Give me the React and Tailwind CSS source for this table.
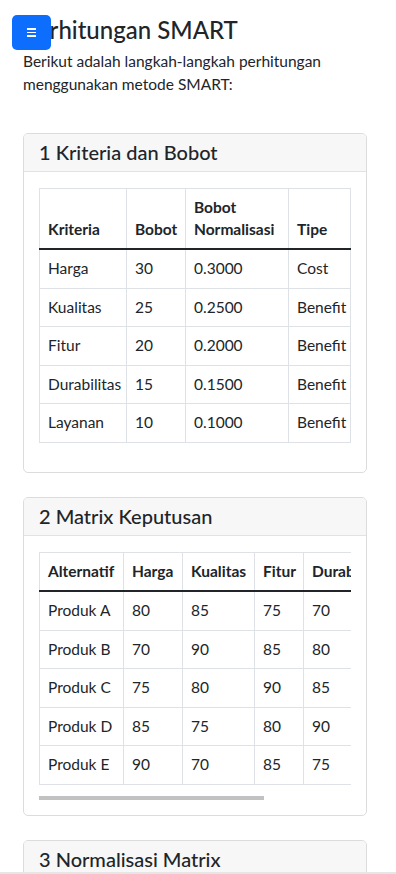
import React from 'react';

const kriteria = [
  { nama: 'Harga', bobot: 30, norm: '0.3000', tipe: 'Cost' },
  { nama: 'Kualitas', bobot: 25, norm: '0.2500', tipe: 'Benefit' },
  { nama: 'Fitur', bobot: 20, norm: '0.2000', tipe: 'Benefit' },
  { nama: 'Durabilitas', bobot: 15, norm: '0.1500', tipe: 'Benefit' },
  { nama: 'Layanan', bobot: 10, norm: '0.1000', tipe: 'Benefit' },
];

const matrix = [
  ['Produk A', 80, 85, 75, 70, 80],
  ['Produk B', 70, 90, 85, 80, 75],
  ['Produk C', 75, 80, 90, 85, 85],
  ['Produk D', 85, 75, 80, 90, 70],
  ['Produk E', 90, 70, 85, 75, 90],
];

const th = 'border border-[#dee2e6] border-b-2 border-b-[#212529] px-2 py-2 leading-[21.5px] text-left align-bottom font-bold';
const td = 'border border-[#dee2e6] px-2 py-2 leading-[21.5px] align-top';

function Card({ title, children }) {
  return (
    <div className="rounded-[5px] border border-[#dcdcdc] bg-white overflow-hidden">
      <div className="bg-[#f7f7f7] border-b border-[#e2e2e2] px-[15px] py-2">
        <h5 className="text-[20px] leading-[21px] font-medium">{title}</h5>
      </div>
      <div className="p-[15px] pt-4">{children}</div>
    </div>
  );
}

export default function App() {
  return (
    <div
      className="min-h-screen bg-white text-[#212529] text-[15.5px] leading-[22.5px] pl-[23px] pr-[29px] pt-[15px] pb-10"
      style={{ fontFamily: 'Lato, "Noto Sans", sans-serif' }}
    >
      <button className="fixed left-[12px] top-[15px] w-[39px] h-[35px] rounded-[5px] bg-[#0d6efd] flex flex-col items-center justify-center gap-[2px]">
        <span className="block w-[9px] h-[1.5px] bg-white" />
        <span className="block w-[9px] h-[1.5px] bg-white" />
        <span className="block w-[9px] h-[1.5px] bg-white" />
      </button>

      <h2 className="text-[24px] leading-[29px] font-medium mb-[6px]">Perhitungan SMART</h2>
      <p className="mb-[38px]">Berikut adalah langkah-langkah perhitungan menggunakan metode SMART:</p>

      <div className="flex flex-col gap-[24px]">
        <Card title="1 Kriteria dan Bobot">
          <table className="w-full table-fixed border-collapse mb-[14px]">
            <thead>
              <tr>
                <th className={`${th} w-[87px]`}>Kriteria</th>
                <th className={`${th} w-[59px]`}>Bobot</th>
                <th className={`${th} w-[103px]`}>Bobot Normalisasi</th>
                <th className={th}>Tipe</th>
              </tr>
            </thead>
            <tbody>
              {kriteria.map((k) => (
                <tr key={k.nama}>
                  <td className={td}>{k.nama}</td>
                  <td className={td}>{k.bobot}</td>
                  <td className={td}>{k.norm}</td>
                  <td className={td}>{k.tipe}</td>
                </tr>
              ))}
            </tbody>
          </table>
        </Card>

        <Card title="2 Matrix Keputusan">
          <div className="overflow-hidden">
            <table className="border-collapse table-fixed w-[433px] whitespace-nowrap">
              <thead>
                <tr>
                  <th className={`${th} w-[84px]`}>Alternatif</th>
                  <th className={`${th} w-[59px]`}>Harga</th>
                  <th className={`${th} w-[72px]`}>Kualitas</th>
                  <th className={`${th} w-[49px]`}>Fitur</th>
                  <th className={`${th} w-[94px]`}>Durabilitas</th>
                  <th className={th}>Layanan</th>
                </tr>
              </thead>
              <tbody>
                {matrix.map((row) => (
                  <tr key={row[0]}>
                    {row.map((v, i) => (
                      <td key={i} className={td}>{v}</td>
                    ))}
                  </tr>
                ))}
              </tbody>
            </table>
          </div>
          <div className="mt-[11px] h-[4px] w-[225px] bg-[#c1c1c1]" />
        </Card>

        <Card title="3 Normalisasi Matrix">
          <div className="h-40" />
        </Card>
      </div>

      <div className="fixed left-0 right-0 bottom-0 h-[2px] bg-[#e6e6e6]" />
    </div>
  );
}
